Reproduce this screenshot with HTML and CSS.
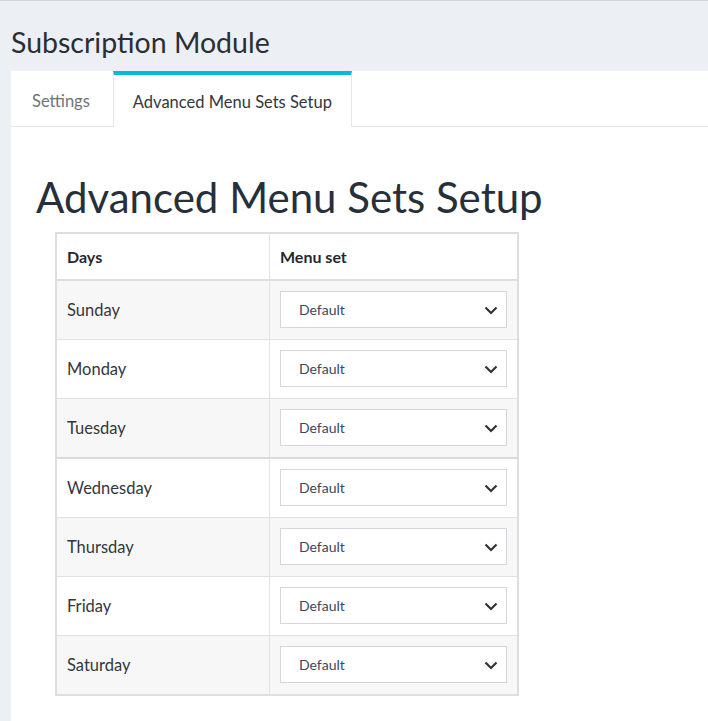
FILE: index.html
```html
<!DOCTYPE html>
<html lang="en">
<head>
    <meta charset="UTF-8">
    <meta name="viewport" content="width=device-width, initial-scale=1.0">
    <title>Subscription Module</title>
    <link rel="stylesheet" href="styles.css">
</head>
<body>
    <h1 class="page-title">Subscription Module</h1>

    <div class="panel">
        <!-- Tabs -->
        <div class="tabs">
            <div class="tab">Settings</div>
            <div class="tab active">Advanced Menu Sets Setup</div>
        </div>

        <div class="tab-content">
            <h2>Advanced Menu Sets Setup</h2>

            <table class="menu-table">
                <thead>
                    <tr><th class="col-day">Days</th><th>Menu set</th></tr>
                </thead>
                <tbody id="daysBody"></tbody>
            </table>
        </div>
    </div>

    <script>
        var days = ["Sunday", "Monday", "Tuesday", "Wednesday", "Thursday", "Friday", "Saturday"];
        var chevron = '<svg class="chevron" width="14" height="9" viewBox="0 0 14 9"><path d="M1.5 1.5 L7 7 L12.5 1.5" fill="none" stroke="#333" stroke-width="2.2"/></svg>';

        var body = document.getElementById('daysBody');
        days.forEach(function (day, i) {
            body.innerHTML += `
                <tr class="${i === 3 ? 'split' : ''}">
                    <td>${day}</td>
                    <td>
                        <div class="select-wrap">
                            <select><option>Default</option></select>
                            ${chevron}
                        </div>
                    </td>
                </tr>`;
        });
    </script>
</body>
</html>
```

FILE: styles.css
```css
/* General */
body {
    margin: 0;
    min-height: 721px;
    background: #eceff3;
    border-top: 1px solid #d3d7dc;
    font-family: 'Lato', sans-serif;
    color: #2b2f36;
    display: flex;
    flex-direction: column;
}
.page-title {
    margin: 0;
    padding: 24px 11px 0;
    height: 46px;
    font-size: 28.5px;
    font-weight: 400;
    color: #2a2e35;
}

/* Panel and tabs */
.panel {
    flex: 1;
    margin-left: 11px;
    background: #fff;
}
.tabs {
    display: flex;
    height: 55px;
    border-bottom: 1px solid #e6e6e6;
}
.tab {
    display: flex;
    align-items: center;
    padding: 5px 23px 0 21px;
    font-size: 16.5px;
    color: #6f7377;
}
.tab.active {
    padding: 2px 19px 0;
    margin-bottom: -1px;
    background: #fff;
    color: #33373d;
    border-top: 4px solid #00bcd2;
    border-left: 1px solid #e6e6e6;
    border-right: 1px solid #e6e6e6;
}
.tab-content {
    padding: 45px 25px 20px;
}
h2 {
    margin: 0 0 10px;
    font-size: 42px;
    font-weight: 400;
    line-height: 50px;
    color: #27303a;
}

/* Table */
.menu-table {
    margin-left: 19px;
    width: 464px;
    border-collapse: collapse;
    border: 2px solid #dedede;
    font-size: 16.5px;
}
.menu-table th,
.menu-table td {
    border: 1px solid #e2e2e2;
    padding: 10px 10px 11px;
    text-align: left;
    color: #33373d;
}
.menu-table th {
    height: 24px;
    border-bottom: 2px solid #dedede;
    font-size: 16px;
    font-weight: 700;
    color: #25292f;
}
.menu-table .col-day {
    width: 192px;
}
.menu-table tbody tr:nth-child(odd) {
    background: #f7f7f7;
}
.menu-table tr.split td {
    border-top: 2px solid #dadada;
}

/* Select */
.select-wrap {
    position: relative;
}
.select-wrap select {
    appearance: none;
    -webkit-appearance: none;
    display: block;
    width: 100%;
    height: 37px;
    padding: 0 18px;
    background: #fff;
    border: 1px solid #d5d5dc;
    border-radius: 0;
    font-family: 'Lato', sans-serif;
    font-size: 14px;
    color: #3c4660;
    outline: none;
}
.chevron {
    position: absolute;
    right: 9px;
    top: 15px;
    pointer-events: none;
}
```
